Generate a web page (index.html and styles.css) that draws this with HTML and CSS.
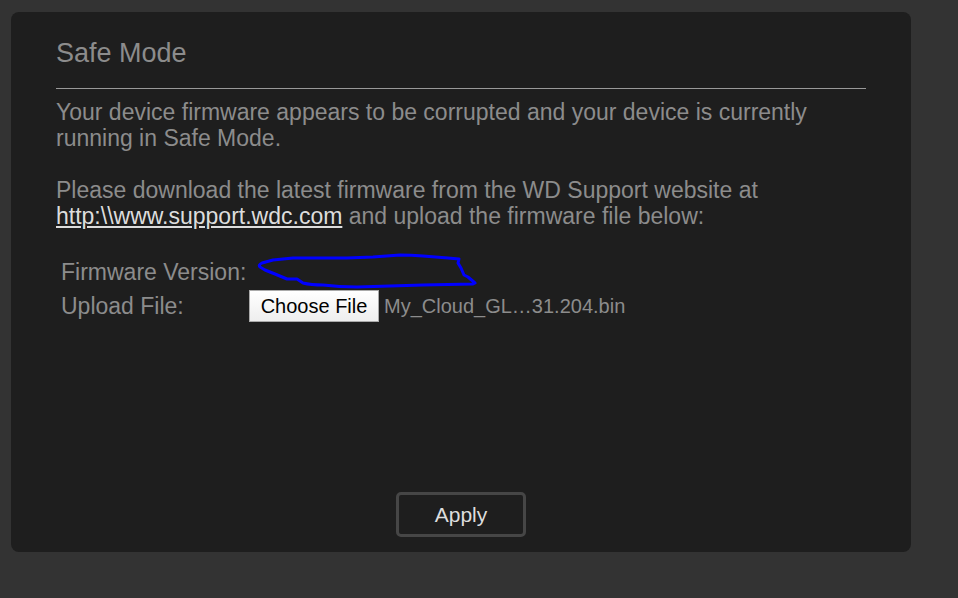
FILE: index.html
```html
<!DOCTYPE html>
<html lang="en">
<head>
  <meta charset="UTF-8">
  <meta name="viewport" content="width=device-width, initial-scale=1.0">
  <title>Safe Mode</title>
  <link rel="stylesheet" href="styles.css">
</head>
<body>
  <main class="panel">
    <h1>Safe Mode</h1>
    <p>Your device firmware appears to be corrupted and your device is currently running in Safe Mode.</p>
    <p>Please download the latest firmware from the WD Support website at <a href="http://www.support.wdc.com">http:\\www.support.wdc.com</a> and upload the firmware file below:</p>

    <form id="firmwareForm">
      <div class="form-row">
        <span class="label">Firmware Version:</span>
        <svg class="scribble" width="230" height="36" viewBox="0 0 230 36" aria-hidden="true">
          <path d="M24 6 L13 9 Q9 11 11 13 L16 16 L26 20 L38 25 L48 25 L54 29 Q62 31 74 31 Q90 33 108 33 L141 32 L174 31 L224 30 L226 29 L219 23 L215 21 L212 14 L209 9 L210 5 L199 4 L174 2 Q162 1 151 1 L124 3 L98 4 L68 4 L44 4 Z"/>
        </svg>
      </div>
      <div class="form-row">
        <label class="label" for="firmwareFile">Upload File:</label>
        <div class="file-picker">
          <input type="file" id="firmwareFile" accept=".bin">
          <label class="choose" for="firmwareFile">Choose File</label>
        </div>
        <span class="file-name" id="fileName">My_Cloud_GL…31.204.bin</span>
      </div>
      <button type="submit" class="apply">Apply</button>
    </form>
  </main>

  <script>
    document.getElementById('firmwareFile').addEventListener('change', function() {
      if (this.files.length) {
        document.getElementById('fileName').textContent = this.files[0].name;
      }
    });
  </script>
</body>
</html>
```

FILE: styles.css
```css
* {
  margin: 0;
  padding: 0;
  box-sizing: border-box;
}

body {
  min-height: 100vh;
  padding: 12px 47px 46px 11px;
  display: flex;
  background: #333;
  color: #8c8c8c;
  font-family: "Liberation Sans", Arial, sans-serif;
  font-size: 23px;
  line-height: 26px;
}

.panel {
  flex: 1;
  display: flex;
  flex-direction: column;
  padding: 25px 45px 15px;
  background: #1e1e1e;
  border-radius: 8px;
}

h1 {
  padding-bottom: 19px;
  margin-bottom: 10px;
  border-bottom: 1px solid #999;
  font-size: 27px;
  font-weight: normal;
  line-height: 32px;
}

p {
  margin-bottom: 26px;
}

a {
  color: #ddd;
}

form {
  flex: 1;
  display: flex;
  flex-direction: column;
}

.form-row {
  display: flex;
  align-items: center;
  height: 34px;
  padding-left: 5px;
}

.label {
  width: 188px;
}

.scribble {
  overflow: visible;
  fill: none;
  stroke: #0000ff;
  stroke-width: 3;
  stroke-linejoin: round;
}

.file-picker {
  position: relative;
}

/* the real input lies invisibly over the styled button */
.file-picker input {
  position: absolute;
  inset: 0;
  width: 100%;
  opacity: 0;
  cursor: pointer;
}

.choose {
  display: block;
  width: 130px;
  height: 32px;
  border: 1px solid #aaa;
  background: linear-gradient(#fff, #eee);
  color: #000;
  font-size: 20px;
  line-height: 30px;
  text-align: center;
}

.file-name {
  margin-left: 5px;
  font-size: 20px;
}

.apply {
  width: 130px;
  height: 45px;
  margin: auto auto 0;
  background: #1e1e1e;
  border: 3px solid #464646;
  border-radius: 5px;
  color: #ddd;
  font-family: inherit;
  font-size: 21px;
  cursor: pointer;
}
```
